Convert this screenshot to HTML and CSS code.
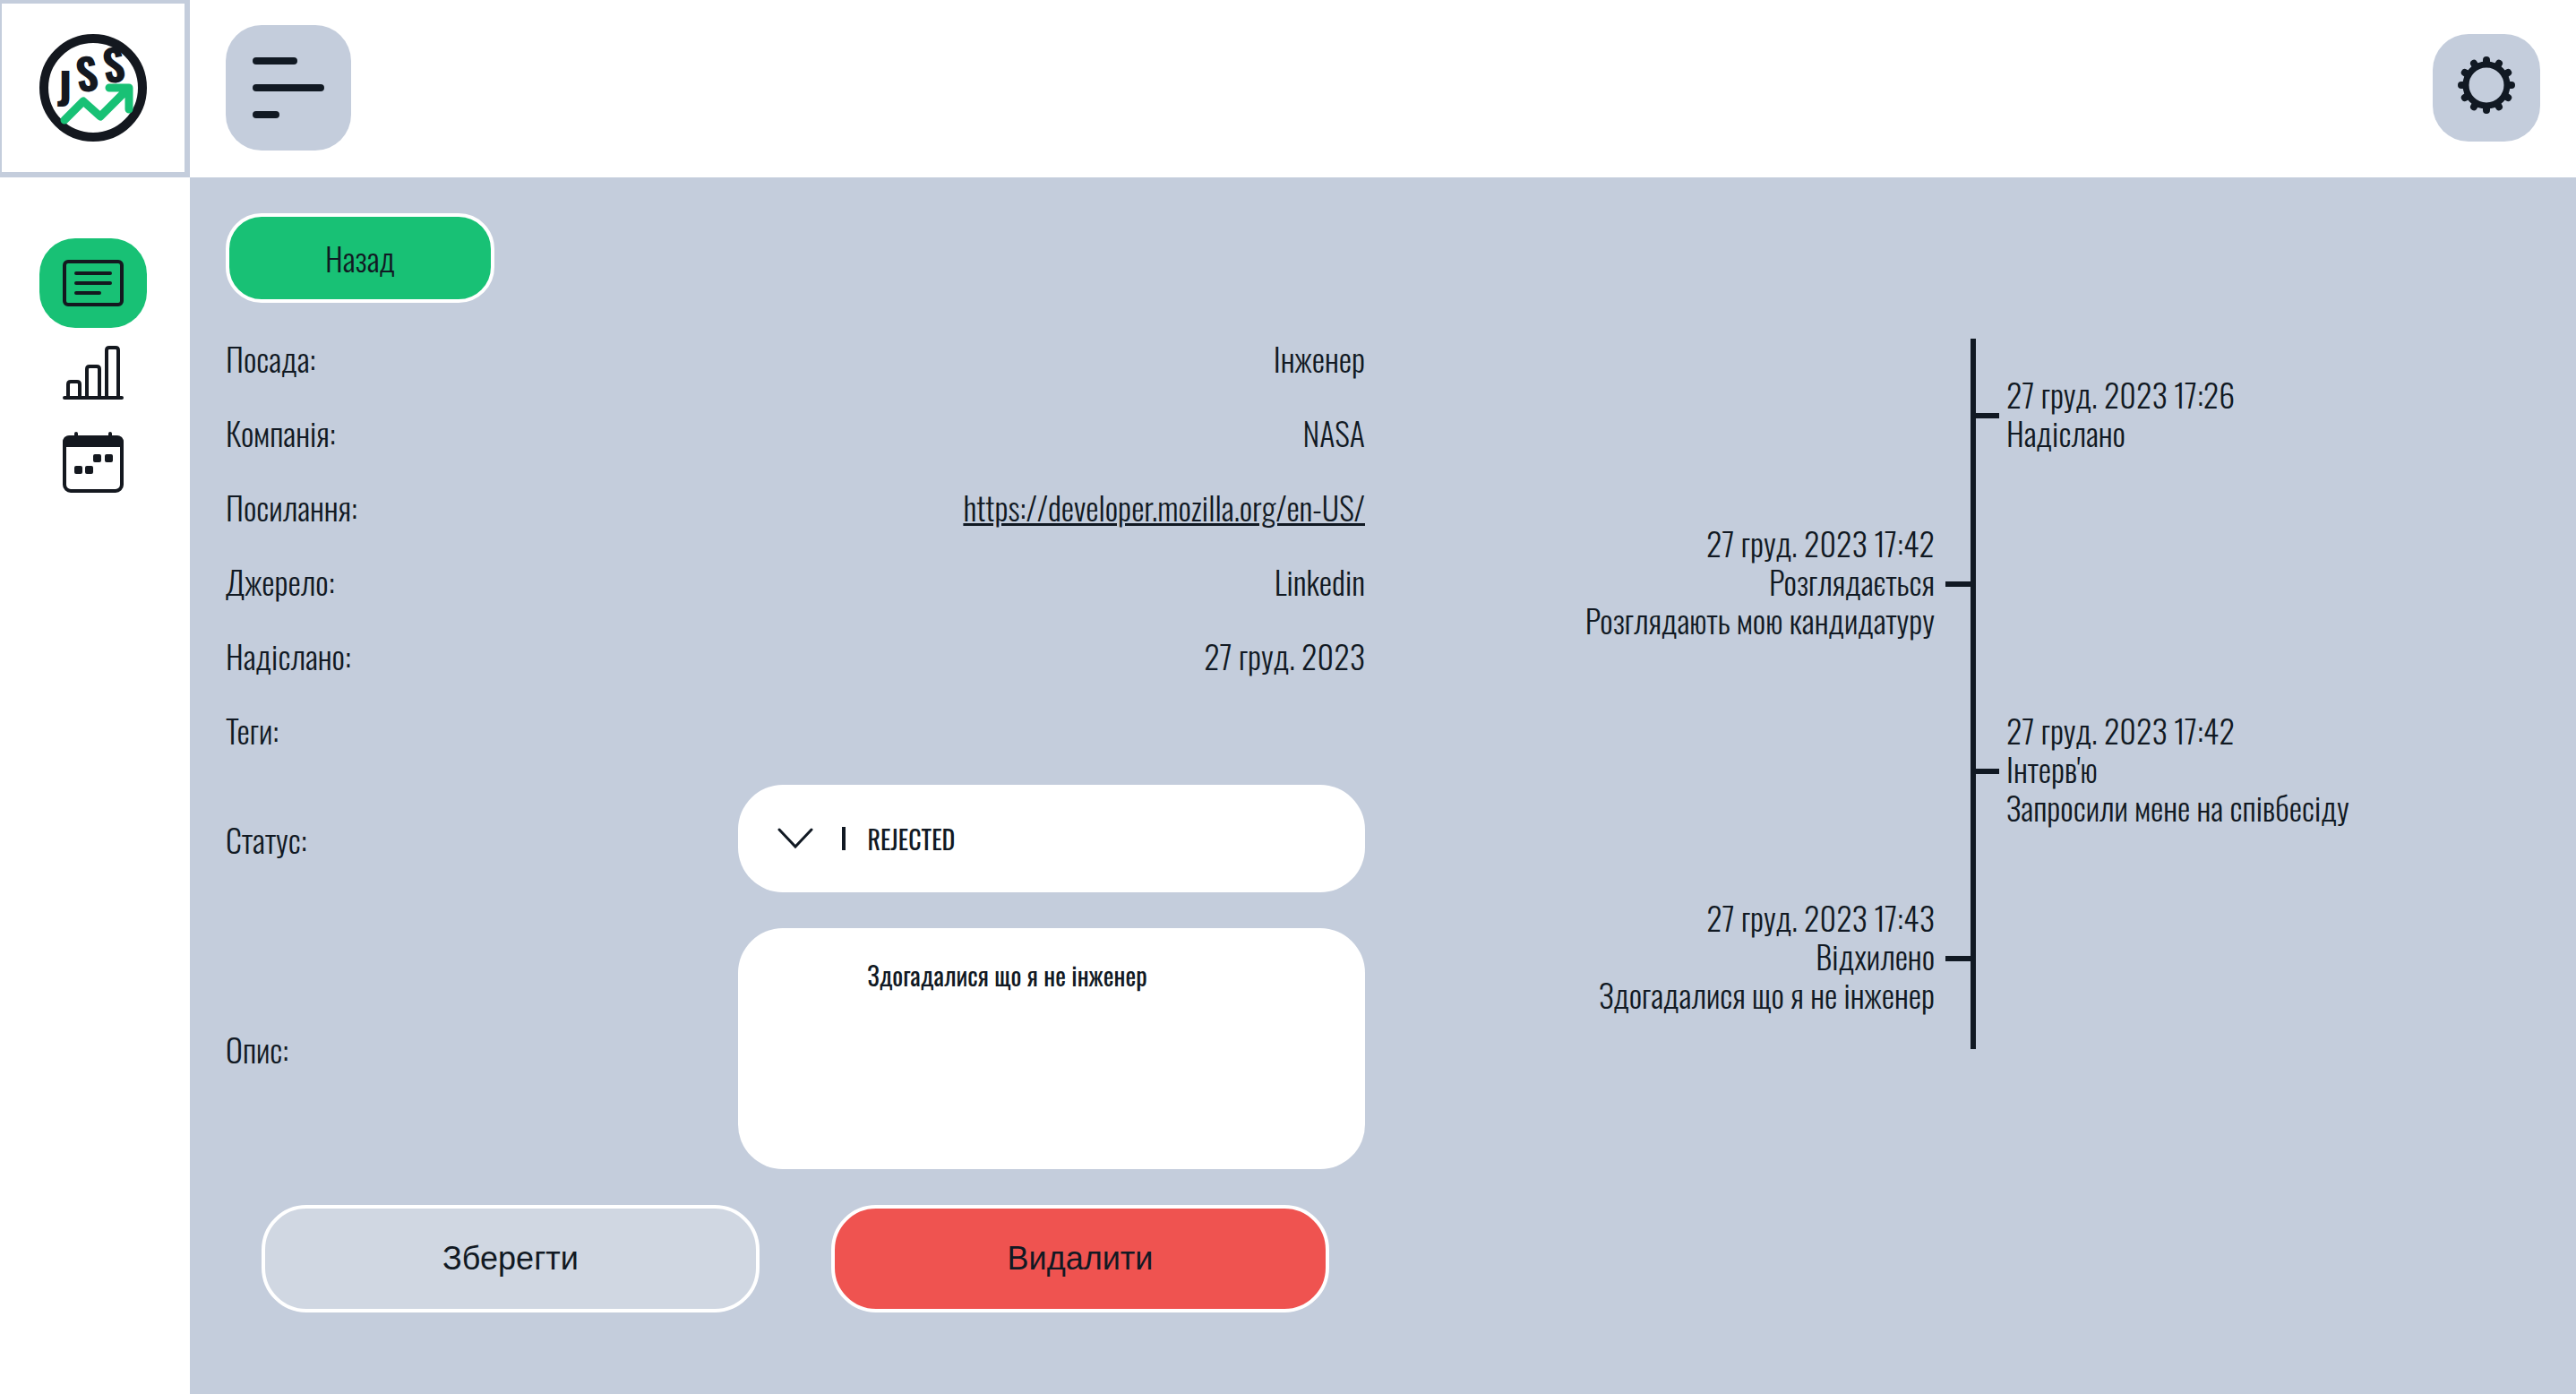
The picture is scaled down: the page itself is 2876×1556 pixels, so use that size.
FILE: index.html
```html
<!DOCTYPE html>
<html lang="uk">
<head>
  <meta charset="utf-8">
  <meta name="viewport" content="width=device-width, initial-scale=1">
  <title>JSS</title>
  <link rel="stylesheet" href="styles.css">
</head>
<body>
  <div class="app">
    <aside class="sidebar">
      <a class="logo" href="#" aria-label="JSS">
        <svg class="logo-mark" width="120" height="120" viewBox="0 0 120 120">
          <circle cx="60" cy="60" r="55" fill="none" stroke="#14181f" stroke-width="10"/>
          <g class="logo-letters">
            <text x="28" y="80">J</text>
            <text x="53" y="64" transform="rotate(-6 53 44)">S</text>
            <text x="83" y="54" transform="rotate(-6 83 34)">S</text>
          </g>
          <path d="M28 96 49 75 68 92 99 61M78 60H100V84" fill="none" stroke="#18c175" stroke-width="9" stroke-linecap="round" stroke-linejoin="round"/>
        </svg>
      </a>
      <nav class="nav">
        <a class="nav-item nav-item-active" href="#" aria-label="Вакансії">
          <svg width="68" height="52" viewBox="0 0 68 52" fill="none" stroke="currentColor" stroke-width="4" stroke-linecap="round">
            <rect x="2" y="2" width="64" height="48" rx="4"/>
            <path d="M15 15H53M15 26H53M15 37H41"/>
          </svg>
        </a>
        <a class="nav-item" href="#" aria-label="Статистика">
          <svg width="68" height="60" viewBox="0 0 68 60" fill="none" stroke="currentColor" stroke-width="4" stroke-linecap="round">
            <path d="M2 58H66M6 58V43Q6 40 9 40H16Q19 40 19 43V58M27 58V26Q27 23 30 23H38Q41 23 41 26V58M49 58V5Q49 2 52 2H59Q62 2 62 5V58"/>
          </svg>
        </a>
        <a class="nav-item" href="#" aria-label="Календар">
          <svg width="68" height="68" viewBox="0 0 68 68" fill="currentColor">
            <rect x="2" y="6" width="64" height="60" rx="7" fill="none" stroke="currentColor" stroke-width="4"/>
            <path d="M0 17V12Q0 4 8 4H60Q68 4 68 12V17Z"/>
            <path d="M15 2V8M53 2V8" stroke="currentColor" stroke-width="4" stroke-linecap="round"/>
            <rect x="34" y="25" width="9" height="9" rx="2"/>
            <rect x="47" y="25" width="9" height="9" rx="2"/>
            <rect x="13" y="38" width="9" height="9" rx="2"/>
            <rect x="25" y="38" width="9" height="9" rx="2"/>
          </svg>
        </a>
      </nav>
    </aside>

    <div class="page">
      <header class="header">
        <button class="menu-button" type="button" aria-label="Меню">
          <svg width="80" height="68" viewBox="0 0 80 68" stroke="currentColor" stroke-width="8" stroke-linecap="round">
            <path d="M4 4H46M4 34H76M4 64H26"/>
          </svg>
        </button>
        <button class="settings-button" type="button" aria-label="Налаштування">
          <svg width="64" height="64" viewBox="-32 -32 64 64" fill="none" stroke="currentColor" stroke-linecap="round">
            <circle r="23" stroke-width="7"/>
            <path stroke-width="8" d="M24 0H28M20.8 12 24.2 14M12 20.8 14 24.2M0 24V28M-12 20.8-14 24.2M-20.8 12-24.2 14M-24 0H-28M-20.8-12-24.2-14M-12-20.8-14-24.2M0-24V-28M12-20.8 14-24.2M20.8-12 24.2-14"/>
          </svg>
        </button>
      </header>

      <main class="content">
        <button class="button button-back" type="button">Назад</button>

        <div class="columns">
          <form class="details">
            <div class="row"><span>Посада:</span><span>Інженер</span></div>
            <div class="row"><span>Компанія:</span><span>NASA</span></div>
            <div class="row"><span>Посилання:</span><a class="link" href="https://developer.mozilla.org/en-US/">https://developer.mozilla.org/en-US/</a></div>
            <div class="row"><span>Джерело:</span><span>Linkedin</span></div>
            <div class="row"><span>Надіслано:</span><span>27 груд. 2023</span></div>
            <div class="row"><span>Теги:</span></div>
            <div class="row">
              <label for="status">Статус:</label>
              <div class="field select-field">
                <svg width="40" height="24" viewBox="0 0 40 24" fill="none" stroke="currentColor" stroke-width="3" stroke-linecap="round"><path d="M2 2 20 21 38 2"/></svg>
                <span class="divider"></span>
                <select class="select" id="status">
                  <option>REJECTED</option>
                </select>
              </div>
            </div>
            <div class="row">
              <label for="description">Опис:</label>
              <textarea class="field textarea" id="description">Здогадалися що я не інженер</textarea>
            </div>
            <div class="actions">
              <button class="button button-save" type="submit">Зберегти</button>
              <button class="button button-delete" type="button">Видалити</button>
            </div>
          </form>

          <ol class="timeline">
            <li class="event event-right"><time>27 груд. 2023 17:26</time><span>Надіслано</span></li>
            <li class="event event-left"><time>27 груд. 2023 17:42</time><span>Розглядається</span><span>Розглядають мою кандидатуру</span></li>
            <li class="event event-right"><time>27 груд. 2023 17:42</time><span>Інтерв'ю</span><span>Запросили мене на співбесіду</span></li>
            <li class="event event-left"><time>27 груд. 2023 17:43</time><span>Відхилено</span><span>Здогадалися що я не інженер</span></li>
          </ol>
        </div>
      </main>
    </div>
  </div>
</body>
</html>
```

FILE: styles.css
```css
:root {
  --ink: #111923;
  --surface: #c4cddc;
  --green: #18c175;
  --red: #ef5350;
  --condensed: Oswald, "Roboto Condensed", "Liberation Sans Narrow", "Liberation Sans", sans-serif;
}

* {
  box-sizing: border-box;
}

body {
  margin: 0;
  color: var(--ink);
  background: #fff;
  font: 300 36px/43px var(--condensed);
}

button,
select,
textarea {
  color: inherit;
  font: inherit;
}

.app {
  display: grid;
  grid-template-columns: 212px 1fr;
  min-height: 100vh;
}

.sidebar {
  background: #fff;
}

.logo {
  display: flex;
  align-items: center;
  justify-content: center;
  height: 198px;
  border: solid var(--surface);
  border-width: 4px 6px 6px 2px;
}

.logo-mark {
  overflow: visible;
}

.logo-letters {
  fill: #14181f;
  font-size: 48px;
  font-weight: 700;
  text-anchor: middle;
}

.nav {
  display: flex;
  flex-direction: column;
  padding: 68px 48px 0 44px;
}

.nav-item {
  display: flex;
  align-items: center;
  justify-content: center;
  height: 100px;
  border-radius: 40px;
  color: #14181f;
}

.nav-item-active {
  background: var(--green);
}

.page {
  display: flex;
  flex-direction: column;
}

.header {
  display: flex;
  align-items: center;
  justify-content: space-between;
  height: 198px;
  padding: 0 40px 2px;
  background: #fff;
}

.menu-button,
.settings-button {
  display: flex;
  align-items: center;
  justify-content: center;
  padding: 0;
  border: 0;
  border-radius: 40px;
  background: var(--surface);
}

.menu-button {
  width: 140px;
  height: 140px;
}

.settings-button {
  width: 120px;
  height: 120px;
  padding-bottom: 6px;
}

.content {
  flex: 1;
  padding: 40px;
  background: var(--surface);
}

.button {
  padding: 0 0 2px;
  border: 4px solid #fff;
}

.button-back {
  width: 300px;
  height: 100px;
  border-radius: 40px;
  background: var(--green);
}

.columns {
  display: grid;
  grid-template-columns: 1fr 1fr;
  gap: 40px;
  align-items: start;
  margin-top: 40px;
}

.details {
  display: flex;
  flex-direction: column;
  gap: 40px;
}

.row {
  display: flex;
  align-items: center;
  justify-content: space-between;
}

.link {
  color: inherit;
  text-decoration-thickness: 3px;
  text-underline-offset: 2px;
}

.field {
  width: 55%;
  border: 0;
  border-radius: 50px;
  background: #fff;
  font-size: 28px;
  font-weight: 400;
}

.select-field {
  display: flex;
  align-items: center;
  height: 120px;
  padding: 0 44px;
}

.divider {
  width: 4px;
  height: 26px;
  margin: 0 24px 0 32px;
  background: currentColor;
}

.select {
  flex: 1;
  padding: 0;
  border: 0;
  appearance: none;
  background: none;
}

.textarea {
  display: block;
  height: 269px;
  padding: 31px 40px 31px 144px;
  resize: none;
}

.actions {
  display: grid;
  grid-template-columns: 1fr 1fr;
  gap: 80px;
  padding: 0 40px;
}

.button-save,
.button-delete {
  height: 120px;
  border-radius: 50px;
  font-family: "Liberation Sans", Arial, sans-serif;
}

.button-save {
  background: #d0d7e2;
}

.button-delete {
  background: var(--red);
}

.timeline {
  position: relative;
  display: flex;
  flex-direction: column;
  margin: 0;
  padding: 0;
  list-style: none;
}

.timeline::before {
  content: "";
  position: absolute;
  top: 0;
  bottom: 0;
  left: 50%;
  width: 6px;
  background: var(--ink);
}

.event {
  position: relative;
  display: flex;
  flex-direction: column;
  width: 50%;
  padding: 40px;
}

.event-right {
  align-self: flex-end;
}

.event-left {
  align-items: flex-end;
  text-align: right;
}

.event::before {
  content: "";
  position: absolute;
  top: 50%;
  width: 28px;
  height: 6px;
  background: var(--ink);
}

.event-right::before {
  left: 4px;
}

.event-left::before {
  right: 0;
}
```
